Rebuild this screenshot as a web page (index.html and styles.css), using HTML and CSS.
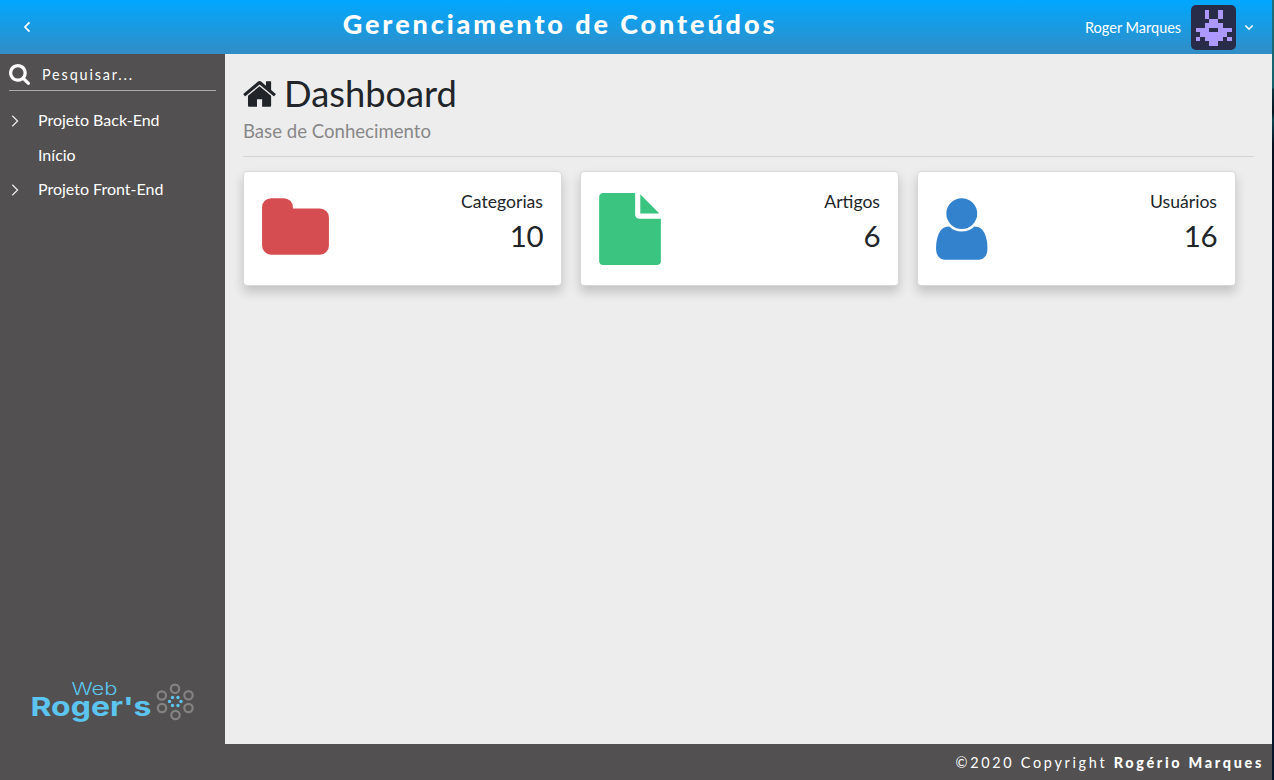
FILE: index.html
```html
<!DOCTYPE html>
<html lang="pt-BR">
<head>
<meta charset="utf-8">
<title>Gerenciamento de Conteúdos</title>
<link rel="stylesheet" href="styles.css">
</head>
<body>
<div class="app">
  <header class="header">
    <a class="toggle"><svg width="8" height="12" viewBox="0 0 8 12"><path d="M6.500 1.300 2 6l4.500 4.700" fill="none" stroke="#fff" stroke-width="1.800"/></svg></a>
    <h1 class="title">Gerenciamento de Conteúdos</h1>
    <div class="user">
      <span class="user-name">Roger Marques</span>
      <svg class="avatar" viewBox="0 0 10 10" shape-rendering="crispEdges"><path fill="#ac98ff" d="M3 1h1v2h2V1h1v2H6v1h1v1h2v1H8v1h1v1H8V7H7v1H6v1H4V8H3V7H2v1H1V7h1V6H1V5h2V4h1V3H3zM4 5v1h2V5z" fill-rule="evenodd"/></svg>
      <svg class="caret" width="10" height="7" viewBox="0 0 10 7"><path d="M1.300 1.500 5 5.100l3.700-3.600" fill="none" stroke="#fff" stroke-width="1.500"/></svg>
    </div>
  </header>
  <aside class="menu">
    <div class="search">
      <svg width="21" height="21" viewBox="64 128 1664 1664"><path fill="#fff" d="M1216 832q0-185-131.500-316.500t-316.500-131.500-316.500 131.500-131.500 316.500 131.500 316.500 316.500 131.500 316.500-131.500 131.500-316.500zm512 832q0 52-38 90t-90 38q-54 0-90-38l-343-342q-179 124-399 124-143 0-273.500-55.500t-225-150-150-225-55.500-273.500 55.500-273.500 150-225 225-150 273.500-55.500 273.500 55.500 225 150 150 225 55.500 273.500q0 220-124 399l343 343q37 37 37 90z"/></svg>
      <span>Pesquisar...</span>
    </div>
    <ul class="tree">
      <li><svg class="arrow" viewBox="0 0 8 12"><path d="M1.300.8 6.600 6l-5.300 5.200"/></svg><span>Projeto Back-End</span></li>
      <li><i class="arrow"></i><span>Início</span></li>
      <li><svg class="arrow" viewBox="0 0 8 12"><path d="M1.300.8 6.600 6l-5.300 5.200"/></svg><span>Projeto Front-End</span></li>
    </ul>
    <svg class="logo" width="166" height="44" viewBox="0 0 166 44">
      <text class="logo-web" x="40.500" y="15" textLength="46" lengthAdjust="spacingAndGlyphs">Web</text>
      <text class="logo-name" x="-0.500" y="36" textLength="121" lengthAdjust="spacingAndGlyphs">Roger's</text>
      <g fill="none" stroke="#858282" stroke-width="2.200">
        <circle cx="144" cy="8.800" r="4.200"/><circle cx="157.500" cy="15.300" r="4.200"/><circle cx="157.500" cy="28" r="4.200"/>
        <circle cx="144.500" cy="35" r="4.200"/><circle cx="131" cy="28" r="4.200"/><circle cx="130.800" cy="15.500" r="4.200"/>
      </g>
      <g fill="#5cc5ef">
        <circle cx="141.500" cy="17.500" r="1.700"/><circle cx="147" cy="17.500" r="1.700"/><circle cx="150" cy="21.500" r="1.700"/>
        <circle cx="147" cy="25.500" r="1.700"/><circle cx="141.500" cy="25.500" r="1.700"/><circle cx="138.500" cy="21.500" r="1.700"/>
      </g>
    </svg>
  </aside>
  <main class="content">
    <div class="page-title">
      <h2><svg width="33" height="36" viewBox="72 0 1643 1792"><path fill="currentColor" d="M1472 992v480q0 26-19 45t-45 19h-384v-384h-256v384h-384q-26 0-45-19t-19-45v-480q0-1 .5-3t.5-3l575-474 575 474q1 2 1 6zm223-69l-62 74q-8 9-21 11h-3q-13 0-21-7l-692-577-692 577q-12 8-24 7-13-2-21-11l-62-74q-8-10-7-23.500t11-21.500l719-599q32-26 76-26t76 26l244 204v-195q0-14 9-23t23-9h192q14 0 23 9t9 23v408l219 182q10 8 11 21.500t-7 23.500z"/></svg><span>Dashboard</span></h2>
      <p>Base de Conhecimento</p>
    </div>
    <div class="stats">
      <section class="stat">
        <svg width="67" height="72" viewBox="64 0 1664 1792"><path fill="#d54d50" d="M1728 608v704q0 92-66 158t-158 66h-1216q-92 0-158-66t-66-158v-960q0-92 66-158t158-66h320q92 0 158 66t66 158v32h672q92 0 158 66t66 158z"/></svg>
        <div class="stat-info"><span class="label">Categorias</span><span class="value">10</span></div>
      </section>
      <section class="stat">
        <svg width="62" height="72" viewBox="128 0 1536 1792"><path fill="#3bc480" d="M1152 512v-472q22 14 36 28l408 408q14 14 28 36h-472zm-128 32q0 40 28 68t68 28h544v1056q0 40-28 68t-68 28h-1344q-40 0-68-28t-28-68v-1600q0-40 28-68t68-28h800v544z"/></svg>
        <div class="stat-info"><span class="label">Artigos</span><span class="value">6</span></div>
      </section>
      <section class="stat">
        <svg width="52" height="72" viewBox="262 0 1280 1792"><path fill="#3282cd" d="M1536 1399q0 109-62.500 187t-150.500 78h-854q-88 0-150.500-78t-62.500-187q0-85 8.500-160.500t31.500-152 58.500-131 94-89 134.500-34.500q131 128 313 128t313-128q76 0 134.500 34.500t94 89 58.500 131 31.500 152 8.500 160.500zm-256-887q0 159-112.500 271.500t-271.500 112.500-271.500-112.500-112.500-271.500 112.500-271.500 271.500-112.500 271.500 112.500 112.500 271.500z"/></svg>
        <div class="stat-info"><span class="label">Usuários</span><span class="value">16</span></div>
      </section>
    </div>
  </main>
  <footer class="footer"><span>©2020 Copyright <strong>Rogério Marques</strong></span></footer>
</div>
</body>
</html>
```
FILE: styles.css
```css
* { box-sizing: border-box; }
body {
  margin: 0;
  height: 780px;
  overflow: hidden;
  font-family: Lato, sans-serif;
  color: #212529;
  background: linear-gradient(#1d6f7c 0, #14606a 88px, #0b3540 89px, #051420 112px, #0c4650 120px, #0a2a38 132px, #06101f 145px, #041020 75%, #06142a 100%);
}
svg { display: block; flex: none; }
.app {
  width: 1272px;
  height: 780px;
  display: grid;
  grid-template: 54px 1fr 36px / 225px 1fr;
}
.header {
  grid-column: 1 / 3;
  display: grid;
  grid-template-columns: 54px 1fr 208px;
  align-items: center;
  background: linear-gradient(#00a8ff, #328dc5);
  color: #fff;
}
.toggle { padding-left: 23px; }
.title {
  margin: 0 0 7px;
  padding-left: 2px;
  text-align: center;
  font-size: 27px;
  line-height: 30px;
  font-weight: 900;
  letter-spacing: 2.9px;
}
.user { display: flex; align-items: center; padding: 1px 0 0 1px; }
.user-name { width: 97px; margin: 0 9px 0 20px; font-size: 14.5px; white-space: nowrap; }
.avatar { width: 45px; height: 45px; border-radius: 5px; background: #292c49; }
.caret { margin-left: 8px; }
.menu {
  background: #525050;
  color: #fff;
  display: flex;
  flex-direction: column;
}
.search {
  display: flex;
  align-items: center;
  height: 37px;
  margin: 0 9px;
  padding-top: 5px;
  border-bottom: 1px solid #aaa;
  font-size: 14.4px;
  letter-spacing: 1.85px;
  gap: 12px;
}
.tree { list-style: none; margin: 13px 0 0; padding: 0 0 0 11px; font-size: 16px; }
.tree li { display: flex; align-items: center; height: 34.5px; }
.tree span { padding-bottom: 3px; }
.arrow { width: 8px; height: 12px; margin-right: 19px; fill: none; stroke: #eee; stroke-width: 1.2; }
.logo { margin: auto 0 20px 31px; fill: #5cc5ef; font-family: Inter, sans-serif; overflow: visible; }
.logo-web { font-size: 17px; font-weight: 300; }
.logo-name { font-size: 26px; font-weight: 700; }
.content { background: #ededed; padding: 18px; }
.page-title { border-bottom: 1px solid #d4d4d4; height: 85px; }
.page-title h2 { display: flex; align-items: center; margin: 0; gap: 8px; height: 43px; font-size: 36.3px; font-weight: 400; }
.page-title h2 span { padding-bottom: 2px; }
.page-title p { margin: 5px 0 0; font-size: 18.6px; line-height: 22px; color: #888; }
.stats { display: grid; grid-template-columns: repeat(3, 319px); gap: 18px; margin-top: 14px; }
.stat {
  height: 115px;
  padding: 21px 18px;
  display: flex;
  justify-content: space-between;
  background: #fff;
  border: 1px solid #d8d8d8;
  border-radius: 4px;
  box-shadow: 0 6px 11px rgba(0, 0, 0, .19);
}
.stat-info { display: flex; flex-direction: column; align-items: flex-end; margin-top: -1px; }
.label { font-size: 17.6px; line-height: 20px; }
.value { font-size: 29.5px; line-height: 36px; margin-top: 6px; letter-spacing: -.5px; }
.footer {
  grid-column: 1 / 3;
  display: flex;
  align-items: center;
  justify-content: flex-end;
  padding: 1px 8px 0 0;
  background: #525050;
  color: #fff;
  font-size: 14.4px;
  letter-spacing: 2.7px;
}
.footer strong { font-weight: 900; }
```
